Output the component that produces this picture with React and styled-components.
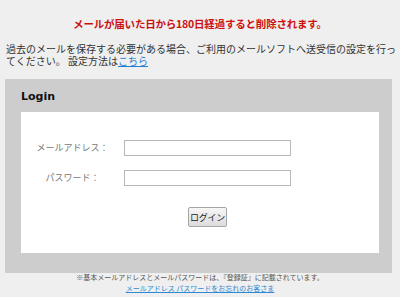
import React from "react";
import styled, { createGlobalStyle } from "styled-components";

const GlobalStyle = createGlobalStyle`
  html, body {
    margin: 0;
    padding: 0;
    background: #efefef;
  }
  body {
    font-family: "Noto Sans CJK JP", "Noto Sans", sans-serif;
  }
`;

const Page = styled.div`
  width: 400px;
  display: flex;
  flex-direction: column;
`;

const Warning = styled.h1`
  margin: 17px 0 0;
  text-align: center;
  font-size: 10.5px;
  line-height: 14px;
  letter-spacing: -0.2px;
  font-weight: bold;
  color: #cc1111;
`;

const Notice = styled.p`
  margin: 12px 0 0 6px;
  font-size: 10px;
  line-height: 12px;
  color: #333;
  white-space: nowrap;
`;

const TextLink = styled.a`
  color: ${({ $color }) => $color || "#1f7fd1"};
  text-decoration: underline;
  cursor: pointer;
`;

const Panel = styled.section`
  margin: 12px 8px 0 5px;
  background: #cdcdcd;
  padding: 0 13px 20px 16px;
`;

const PanelTitle = styled.h2`
  margin: 0;
  padding: 11px 0 9px;
  font-family: "DejaVu Sans", sans-serif;
  font-size: 11px;
  line-height: 13px;
  font-weight: bold;
  color: #111;
`;

const FormBox = styled.div`
  background: #fff;
  padding: 28px 0 26px;
  display: grid;
  grid-template-columns: 103px 167px;
  row-gap: 14px;
  align-items: center;
`;

const Label = styled.label`
  text-align: center;
  font-size: 9px;
  line-height: 16px;
  color: #777;
`;

const Field = styled.input`
  box-sizing: border-box;
  width: 167px;
  height: 16px;
  margin: 0;
  border: 1px solid #b8b8b8;
  background: #fff;
  padding: 0 3px;
  outline: none;
`;

const ButtonCell = styled.div`
  grid-column: 2;
  display: flex;
  justify-content: center;
  margin-top: 7px;
`;

const Button = styled.button`
  box-sizing: border-box;
  width: 39px;
  height: 20px;
  padding: 0;
  border: 1px solid #a6a6a6;
  border-radius: 2px;
  background: linear-gradient(#f6f6f6, #dcdcdc);
  font-family: "Noto Sans CJK JP", sans-serif;
  font-size: 9px;
  color: #222;
  letter-spacing: -0.3px;
`;

const Footer = styled.footer`
  margin-top: -1px;
  text-align: center;
  font-size: 7px;
  line-height: 10.5px;
  color: #555;
`;

export default function App() {
  return (
    <Page>
      <GlobalStyle />
      <Warning>メールが届いた日から180日経過すると削除されます。</Warning>
      <Notice>
        過去のメールを保存する必要がある場合、ご利用のメールソフトへ送受信の設定を行っ
        <br />
        てください。 設定方法は<TextLink>こちら</TextLink>
      </Notice>
      <Panel>
        <PanelTitle>Login</PanelTitle>
        <FormBox>
          <Label htmlFor="mail">メールアドレス：</Label>
          <Field id="mail" type="text" />
          <Label htmlFor="pass">パスワード：</Label>
          <Field id="pass" type="password" />
          <ButtonCell>
            <Button type="button">ログイン</Button>
          </ButtonCell>
        </FormBox>
      </Panel>
      <Footer>
        ※基本メールアドレスとメールパスワードは、『登録証』に記載されています。
        <br />
        <TextLink $color="#2a8ad6">メールアドレス パスワードをお忘れのお客さま</TextLink>
      </Footer>
    </Page>
  );
}
